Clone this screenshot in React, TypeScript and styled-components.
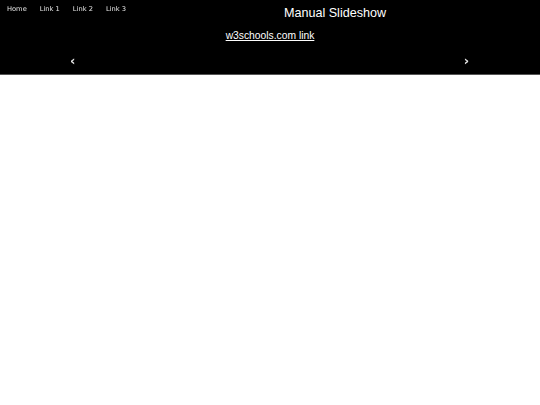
import React from 'react';
import styled, { createGlobalStyle } from 'styled-components';

const GlobalStyle = createGlobalStyle`
  html, body {
    margin: 0;
    padding: 0;
    background: #fff;
  }
`;

const Header = styled.header`
  background: #000;
  height: 74px;
  border-bottom: 1px solid #555;
  display: flex;
  flex-direction: column;
`;

const TopRow = styled.div`
  display: flex;
  align-items: flex-start;
`;

// will-change gives the small text grey antialiasing, as in the reference
const Nav = styled.nav`
  display: flex;
  gap: 13px;
  padding: 5px 0 0 7px;
  width: 123px;
  will-change: transform;
`;

const NavLink = styled.a`
  font-family: 'DejaVu Sans', sans-serif;
  font-size: 6.7px;
  color: #e6e6e6;
  text-decoration: none;
`;

const Title = styled.h1`
  flex: 1;
  margin: 0;
  padding-top: 6px;
  text-align: center;
  font-family: 'Liberation Sans', Arial, sans-serif;
  font-size: 12.6px;
  font-weight: normal;
  color: #fff;
`;

const SiteLink = styled.a`
  display: block;
  margin-top: 10px;
  text-align: center;
  font-family: 'Liberation Sans', Arial, sans-serif;
  font-size: 10.3px;
  color: #fff;
  text-decoration: underline;
`;

const Controls = styled.div`
  display: flex;
  justify-content: space-between;
  padding: 12px 71px 0 70px;
  will-change: transform;
`;

const Arrow = styled.span`
  font-family: 'DejaVu Sans', sans-serif;
  font-size: 13px;
  font-weight: bold;
  color: #e6e6e6;
  cursor: pointer;
`;

const App: React.FC = () => (
  <>
    <GlobalStyle />
    <Header>
      <TopRow>
        <Nav>
          <NavLink href="#">Home</NavLink>
          <NavLink href="#">Link 1</NavLink>
          <NavLink href="#">Link 2</NavLink>
          <NavLink href="#">Link 3</NavLink>
        </Nav>
        <Title>Manual Slideshow</Title>
      </TopRow>
      <SiteLink href="#">w3schools.com link</SiteLink>
      <Controls>
        <Arrow>&#8249;</Arrow>
        <Arrow>&#8250;</Arrow>
      </Controls>
    </Header>
  </>
);

export default App;
